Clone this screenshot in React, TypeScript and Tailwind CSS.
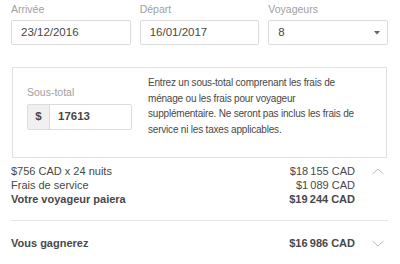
import React from "react";

function Chevron({ up }: { up?: boolean }) {
  return (
    <svg width="12" height="7" viewBox="0 0 12 7" className="block">
      <path
        d={up ? "M0.5 6 L6 1 L11.5 6" : "M0.5 1 L6 6 L11.5 1"}
        fill="none"
        stroke="#b4b4b4"
        strokeWidth="0.9"
      />
    </svg>
  );
}

export default function App() {
  const font = { fontFamily: '"Liberation Sans", Arial, sans-serif' };
  const nb = "\u202F";
  return (
    <div className="w-[400px] h-[264px] bg-white overflow-hidden text-[#484848]" style={font}>
      <div className="pl-[11px] pr-[12px] pt-[3px]">
        <div className="grid grid-cols-3 gap-x-[9px]">
          {[
            ["Arrivée", "23/12/2016"],
            ["Départ", "16/01/2017"],
            ["Voyageurs", "8"],
          ].map(([label, value], i) => (
            <div key={label} className="flex flex-col">
              <div className="text-[10.5px] leading-[13px] text-[#a0a0a0] h-[17px]">{label}</div>
              <div className="h-[25px] border border-[#dcdcdc] rounded-[2px] flex items-center pl-[9px] pr-[7px] text-[11.5px]">
                <span className="flex-1">{value}</span>
                {i === 2 && (
                  <svg width="6" height="4" viewBox="0 0 6 4">
                    <path d="M0 0 L6 0 L3 3.5 Z" fill="#666666" />
                  </svg>
                )}
              </div>
            </div>
          ))}
        </div>

        <div className="mt-[22px] ml-[1px] mr-[1px] h-[91px] border border-[#e2e2e2] flex pl-[14px]">
          <div className="w-[105px] pt-[18px] shrink-0">
            <div className="text-[10.5px] leading-[13px] text-[#a0a0a0]">Sous-total</div>
            <div className="mt-[5px] h-[26px] flex border border-[#dcdcdc] rounded-[2px] text-[11.5px]">
              <div className="w-[22px] bg-[#f0f0f0] border-r border-[#dcdcdc] flex items-center justify-center font-bold">$</div>
              <div className="flex items-center pl-[8px] font-bold">17613</div>
            </div>
          </div>
          <div className="ml-[16px] pt-[7px] text-[10px] leading-[15.5px] tracking-[-0.2px] whitespace-nowrap">
            Entrez un sous-total comprenant les frais de
            <br />
            ménage ou les frais pour voyageur
            <br />
            supplémentaire. Ne seront pas inclus les frais de
            <br />
            service ni les taxes applicables.
          </div>
        </div>

        <div className="mt-[6px] flex text-[11px] leading-[14px]">
          <div className="flex-1">
            <div>$756 CAD x 24 nuits</div>
            <div>Frais de service</div>
            <div className="font-bold">Votre voyageur paiera</div>
          </div>
          <div className="text-right">
            <div>{`$18${nb}155 CAD`}</div>
            <div>{`$1${nb}089 CAD`}</div>
            <div className="font-bold">{`$19${nb}244 CAD`}</div>
          </div>
          <div className="w-[33px] flex justify-end pr-[4px] pt-[4px]">
            <Chevron up />
          </div>
        </div>

        <div className="mt-[14px] h-px bg-[#e4e4e4]" />

        <div className="mt-[15px] flex text-[11px] leading-[14px] font-bold">
          <div className="flex-1">Vous gagnerez</div>
          <div className="text-right">{`$16${nb}986 CAD`}</div>
          <div className="w-[33px] flex justify-end pr-[4px] pt-[4px]">
            <Chevron />
          </div>
        </div>
      </div>
    </div>
  );
}
